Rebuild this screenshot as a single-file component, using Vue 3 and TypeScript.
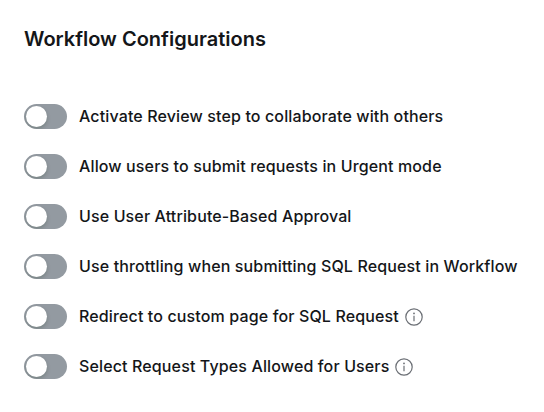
<script setup lang="ts">
import { ref } from 'vue'

interface Setting {
  label: string
  info?: boolean
  enabled: boolean
}

const settings = ref<Setting[]>([
  { label: 'Activate Review step to collaborate with others', enabled: false },
  { label: 'Allow users to submit requests in Urgent mode', enabled: false },
  { label: 'Use User Attribute-Based Approval', enabled: false },
  { label: 'Use throttling when submitting SQL Request in Workflow', enabled: false },
  { label: 'Redirect to custom page for SQL Request', info: true, enabled: false },
  { label: 'Select Request Types Allowed for Users', info: true, enabled: false },
])
</script>

<template>
  <main class="page">
    <h1 class="title">Workflow Configurations</h1>
    <ul class="settings">
      <li v-for="s in settings" :key="s.label" class="row">
        <button
          type="button"
          role="switch"
          class="switch"
          :class="{ on: s.enabled }"
          :aria-checked="s.enabled"
          :aria-label="s.label"
          @click="s.enabled = !s.enabled"
        >
          <span class="knob"></span>
        </button>
        <span class="label">{{ s.label }}</span>
        <svg v-if="s.info" class="info" viewBox="0 0 18 18" aria-hidden="true">
          <circle cx="9" cy="9" r="8.2" fill="none" stroke="currentColor" stroke-width="1.2" />
          <circle cx="9" cy="5.4" r="0.9" fill="currentColor" />
          <path d="M9 7.7V13.2" fill="none" stroke="currentColor" stroke-width="1.2" />
        </svg>
      </li>
    </ul>
  </main>
</template>

<style>
body {
  background: #fff;
}
</style>

<style scoped>
.page {
  box-sizing: border-box;
  height: 412px;
  padding: 24px;
  background: #fff;
  color: #141619;
  font-family: Inter, 'Liberation Sans', sans-serif;
}
.title {
  margin: 0;
  font-size: 20px;
  line-height: 30px;
  font-weight: 600;
  white-space: nowrap;
}
.settings {
  display: flex;
  flex-direction: column;
  gap: 25px;
  margin: 50px 0 0;
  padding: 0;
  list-style: none;
}
.row {
  display: flex;
  align-items: center;
  height: 25px;
}
.switch {
  display: flex;
  align-items: center;
  flex: none;
  box-sizing: border-box;
  width: 43px;
  height: 25px;
  padding: 2px;
  border: 0;
  border-radius: 13px;
  background: #939aa1;
  overflow: hidden;
}
.switch.on {
  justify-content: flex-end;
  background: #2f6fed;
}
.knob {
  width: 21px;
  height: 21px;
  border-radius: 50%;
  background: #fff;
  box-shadow: 0 2px 4px rgba(0, 35, 11, 0.2);
}
.label {
  margin-left: 12px;
  padding-bottom: 1px;
  font-size: 16px;
  line-height: 24px;
  font-weight: 500;
  letter-spacing: 0.13px;
  white-space: nowrap;
}
.info {
  flex: none;
  width: 18px;
  height: 18px;
  margin: 1px 0 0 6px;
  color: #6b6f75;
}
</style>
